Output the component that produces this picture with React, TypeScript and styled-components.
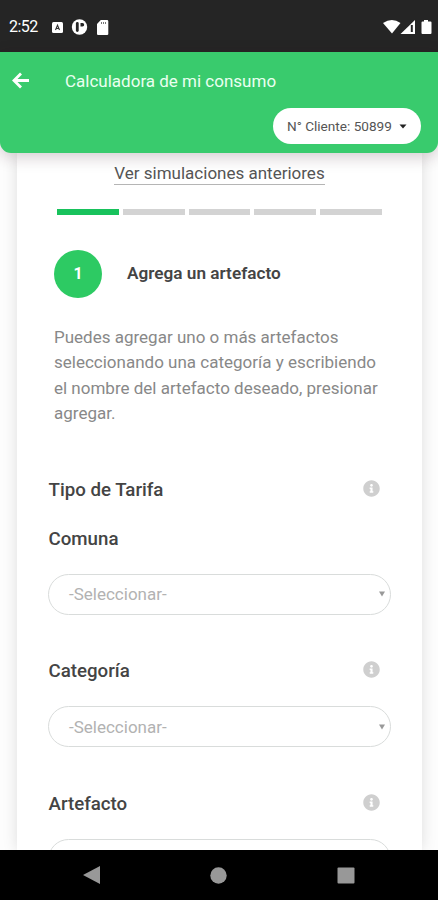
import React from "react";
import styled, { createGlobalStyle } from "styled-components";
import { FaInfoCircle } from "react-icons/fa";

const GlobalStyle = createGlobalStyle`
  * { box-sizing: border-box; }
  body { margin: 0; background: #fff; font-family: Roboto, "Liberation Sans", sans-serif; }
`;

const Phone = styled.div`
  width: 438px;
  height: 900px;
  display: flex;
  flex-direction: column;
  overflow: hidden;
  background: #fdfdfd;
`;

const StatusBar = styled.div`
  flex: none;
  height: 52px;
  background: #252525;
  display: flex;
  align-items: center;
  justify-content: space-between;
  padding: 2px 6px 0 9px;
  color: #fff;
`;

const StatusGroup = styled.div<{ $gap: number }>`
  display: flex;
  align-items: center;
  gap: ${(p) => p.$gap}px;
  svg { display: block; }
`;

const Clock = styled.span`
  width: 35px;
  font-size: 16px;
  line-height: 20px;
  letter-spacing: -0.5px;
  white-space: nowrap;
`;

const Header = styled.header`
  flex: none;
  position: relative;
  z-index: 1;
  height: 101px;
  background: #39cb6d;
  border-radius: 0 0 11px 11px;
  box-shadow: 0 4px 16px rgba(50, 20, 30, 0.22);
  display: flex;
  flex-direction: column;
`;

const TitleRow = styled.div`
  height: 56px;
  padding-left: 12px;
  display: flex;
  align-items: center;
  gap: 36px;
  svg { display: block; }
`;

const Title = styled.h1`
  margin: 2px 0 0;
  color: #eafff0;
  font-size: 17px;
  font-weight: 400;
  line-height: 22px;
  white-space: nowrap;
`;

const ClientButton = styled.button`
  align-self: flex-end;
  margin-right: 17px;
  width: 148px;
  height: 36px;
  padding: 0 14px;
  border: 0;
  border-radius: 18px;
  background: #fff;
  color: #555;
  font: 400 13.6px/18px Roboto, sans-serif;
  white-space: nowrap;
  display: flex;
  align-items: center;
  justify-content: space-between;
`;

const Content = styled.main`
  flex: 1;
  min-height: 0;
  overflow: hidden;
  padding: 0 16px 0 17px;
`;

const Card = styled.section`
  height: 697px;
  overflow: hidden;
  background: #fff;
  box-shadow: 0 0 14px rgba(0, 0, 0, 0.13);
  display: flex;
  flex-direction: column;
  padding: 10px 31px 0;
`;

const HistoryLink = styled.a`
  align-self: center;
  flex: none;
  height: 22px;
  border-bottom: 1.5px solid #b5b5b5;
  color: #555;
  font-size: 17px;
  line-height: 21px;
  white-space: nowrap;
`;

const Progress = styled.div`
  flex: none;
  display: grid;
  grid-template-columns: repeat(5, 1fr);
  gap: 4px;
  margin: 24px 9px 0 9px;
`;

const Segment = styled.span<{ $active?: boolean }>`
  height: 6px;
  background: ${(p) => (p.$active ? "#18c25c" : "#d3d3d3")};
`;

const StepHeading = styled.div`
  flex: none;
  display: flex;
  align-items: center;
  gap: 25px;
  margin: 35px 0 0 6px;
`;

const StepNumber = styled.span`
  width: 48px;
  height: 48px;
  border-radius: 50%;
  background: #2dca63;
  color: #fff;
  font-size: 16px;
  font-weight: 700;
  line-height: 48px;
  text-align: center;
`;

const StepTitle = styled.h2`
  margin: 0 0 2px;
  color: #444;
  font-size: 17.2px;
  font-weight: 600;
  line-height: 24px;
  white-space: nowrap;
`;

const Description = styled.p`
  flex: none;
  margin: 27px 0 0 6px;
  color: #888;
  font-size: 17px;
  line-height: 25.4px;
  white-space: nowrap;
`;

const FieldLabel = styled.div<{ $top: number }>`
  flex: none;
  display: flex;
  align-items: center;
  justify-content: space-between;
  height: 24px;
  margin-top: ${(p) => p.$top}px;
  padding: 0 11.5px 0 0.5px;
  color: #444;
  font-size: 18.7px;
  font-weight: 500;
  svg { display: block; margin-top: -3px; color: #cfcfcf; }
`;

const Select = styled.div<{ $top: number }>`
  flex: none;
  height: 41px;
  width: 343px;
  margin-top: ${(p) => p.$top}px;
  padding: 0 5px 0 20px;
  border: 1.5px solid #d9dcdb;
  border-radius: 21px;
  color: #b2b2b2;
  font-size: 17px;
  display: flex;
  align-items: center;
  justify-content: space-between;
`;

const NavBar = styled.nav`
  flex: none;
  height: 50px;
  background: #000;
  display: flex;
  align-items: center;
  justify-content: space-between;
  padding: 0 83px 0 83px;
  svg { display: block; }
`;

const SelectBox = ({ top, text = "" }: { top: number; text?: string }) => (
  <Select $top={top}>
    <span>{text}</span>
    <svg width="6" height="6" viewBox="0 0 6 6"><path d="M0 0.5h6L3 5.5z" fill="#999" /></svg>
  </Select>
);

export default function App() {
  return (
    <Phone>
      <GlobalStyle />
      <StatusBar>
        <StatusGroup $gap={8}>
          <Clock>2:52</Clock>
          <svg width="11" height="11" viewBox="0 0 11 11">
            <rect width="11" height="11" rx="1.5" fill="#fff" />
            <path d="M3.5 8 5.5 3.2 7.5 8M4.2 6.5h2.6" fill="none" stroke="#333" strokeWidth="1.1" />
          </svg>
          <svg width="17" height="16" viewBox="0 0 17 16">
            <circle cx="8.5" cy="8" r="7.7" fill="#fff" />
            <path d="M6.3 4.5v7" stroke="#252525" strokeWidth="2.8" strokeLinecap="round" />
            <path d="M9.5 4h2a1.7 1.7 0 0 1 0 3.4h-2z" fill="#252525" />
          </svg>
          <svg width="14" height="15" viewBox="0 0 14 15">
            <path d="M4.8 0H11a1.3 1.3 0 0 1 1.3 1.3v12.2A1.3 1.3 0 0 1 11 15H2.3A1.3 1.3 0 0 1 1 13.5V4z" fill="#fff" />
            <path d="M5.5 2v2M7.5 2v2M9.5 2v2" stroke="#777" strokeWidth="1" />
          </svg>
        </StatusGroup>
        <StatusGroup $gap={0}>
          <svg width="50" height="16" viewBox="0 0 50 16">
            <path d="M1 4Q10 -2 18.5 4L10 14.5z" fill="#fff" />
            <path d="M18.5 15H33V1z" fill="#fff" />
            <path d="M29.8 6v7" stroke="#252525" strokeWidth="2" />
            <path d="M42 1h4v1.5h2.5a1 1 0 0 1 1 1V14a1 1 0 0 1-1 1h-8a1 1 0 0 1-1-1V3.5a1 1 0 0 1 1-1H42z" fill="#fff" />
          </svg>
        </StatusGroup>
      </StatusBar>
      <Header>
        <TitleRow>
          <svg width="17" height="17" viewBox="0 0 17 17" fill="none" stroke="#fff" strokeWidth="2.8">
            <path d="M9 1.5 2 8.5l7 7M2.5 8.5H17" />
          </svg>
          <Title>Calculadora de mi consumo</Title>
        </TitleRow>
        <ClientButton>
          <span>N° Cliente: 50899</span>
          <svg width="8" height="5" viewBox="0 0 8 5"><path d="M.5.5h7L4 4.5z" fill="#222" /></svg>
        </ClientButton>
      </Header>
      <Content>
        <Card>
          <HistoryLink>Ver simulaciones anteriores</HistoryLink>
          <Progress>
            <Segment $active /><Segment /><Segment /><Segment /><Segment />
          </Progress>
          <StepHeading>
            <StepNumber>1</StepNumber>
            <StepTitle>Agrega un artefacto</StepTitle>
          </StepHeading>
          <Description>
            Puedes agregar uno o más artefactos<br />
            seleccionando una categoría y escribiendo<br />
            el nombre del artefacto deseado, presionar<br />
            agregar.
          </Description>
          <FieldLabel $top={50.9}>Tipo de Tarifa<FaInfoCircle size={17} /></FieldLabel>
          <FieldLabel $top={25}>Comuna</FieldLabel>
          <SelectBox top={23} text="-Seleccionar-" />
          <FieldLabel $top={44.5}>Categoría<FaInfoCircle size={17} /></FieldLabel>
          <SelectBox top={23} text="-Seleccionar-" />
          <FieldLabel $top={45}>Artefacto<FaInfoCircle size={17} /></FieldLabel>
          <SelectBox top={23} />
        </Card>
      </Content>
      <NavBar>
        <svg width="17" height="20" viewBox="0 0 17 20"><path d="M0 10 17 1v18z" fill="#989898" /></svg>
        <svg width="17" height="17" viewBox="0 0 17 17"><circle cx="8.5" cy="8.5" r="8.2" fill="#989898" /></svg>
        <svg width="18" height="17" viewBox="0 0 18 17"><rect x=".5" y=".5" width="17" height="16" rx="1" fill="#989898" /></svg>
      </NavBar>
    </Phone>
  );
}
